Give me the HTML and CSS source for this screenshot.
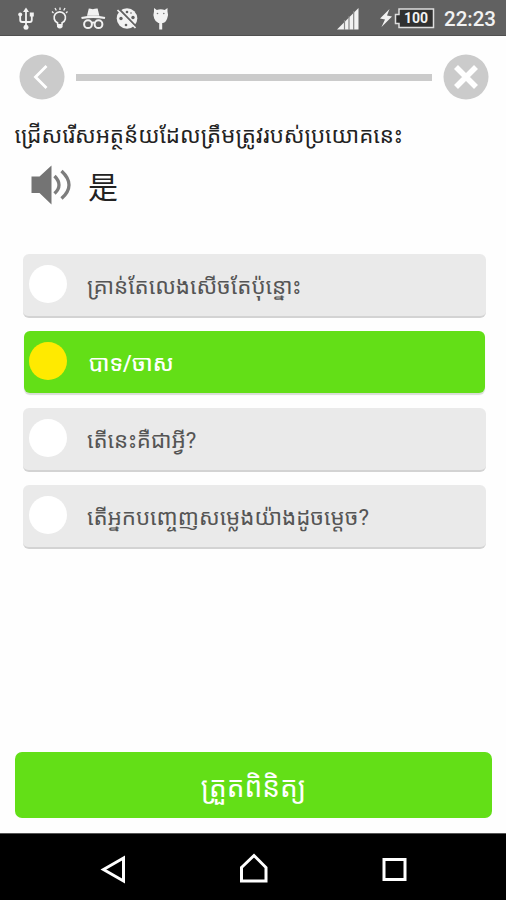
FILE: index.html
```html
<!DOCTYPE html>
<html lang="km">
<head>
<meta charset="utf-8">
<meta name="viewport" content="width=device-width">
<title>Quiz</title>
<link rel="stylesheet" href="styles.css">
</head>
<body>
<div class="screen">
  <div class="status">
    <svg class="status-icons" width="180" height="36" viewBox="0 0 180 36" fill="none" stroke="#f2f2f2" stroke-width="1.8">
      <g>
        <path d="M26 11V27M20.200 15v5q0 2 2 2h7.600q2 0 2-2v-5"/>
        <path d="M26 7.500l3 4.500h-6z" fill="#f2f2f2" stroke="none"/>
        <circle cx="20.200" cy="14.500" r="2" fill="#f2f2f2" stroke="none"/>
        <path d="M29.800 12.500h4v4h-4z" fill="#f2f2f2" stroke="none"/>
        <circle cx="26" cy="27.200" r="2.500" fill="#f2f2f2" stroke="none"/>
      </g>
      <g>
        <path d="M57.500 24.500v-1.700a5.700 5.700 0 1 1 4.600 0v1.700" stroke-width="1.700"/>
        <path d="M57 24h5.600v3q-2.800 3-5.600 0z" fill="#f2f2f2" stroke="none"/>
        <path d="M60 7.500v2.500M55 8l1.300 2.500M65 8l-1.300 2.500M52 11.500l1.500 1.500M67.500 11.500L66 13" stroke-width="1.300"/>
      </g>
      <g>
        <path d="M87 15.700l1.800-7.200q2 0 4 .8 2.500-1 4.800-.8l1.800 7.200z" fill="#f2f2f2" stroke="none"/>
        <path d="M81.500 18q12-2.400 23.500 0" stroke-width="2.200"/>
        <circle cx="88" cy="24.200" r="3.900" stroke-width="2"/><circle cx="98.500" cy="24.200" r="3.900" stroke-width="2"/><path d="M91.500 23q1.700-1 3.500 0"/>
      </g>
      <g>
        <circle cx="127" cy="18.500" r="10.300" fill="#f2f2f2" stroke="none"/>
        <g fill="#616161" stroke="none"><circle cx="127" cy="12" r="1.300"/><circle cx="133" cy="17.500" r="1.700"/><circle cx="121" cy="18.500" r="1.700"/><circle cx="126" cy="25" r="1.300"/><circle cx="131" cy="13" r=".8"/></g>
        <path d="M118.500 8.500l18 18.500" stroke="#616161" stroke-width="2"/>
        <path d="M117.500 10l18 18" stroke-width="1.700"/>
      </g>
      <g>
        <path d="M154 8l2.800 2q4-1.500 7.900 0l2.800-2v3.500q1.300 3.500-.3 7-1.500 4-4.200 4.500h-4.600q-3-1-4.200-4.500-1.500-3.500-.2-7z" fill="#f2f2f2" stroke="none"/>
        <path d="M160.700 22v7.500" stroke-width="3"/>
        <circle cx="157.500" cy="13.500" r=".8" fill="#777" stroke="none"/><circle cx="163.800" cy="13.500" r=".8" fill="#777" stroke="none"/>
      </g>
    </svg>
    <svg class="signal" width="22" height="22" viewBox="0 0 22 22">
      <path d="M0 21.500L21.500 0v21.500z" fill="#f2f2f2"/>
      <path d="M7.500 12v10M12 8v14M16.700 3v19" stroke="#858585" stroke-width="1.200"/>
    </svg>
    <svg class="bolt" width="12" height="18" viewBox="0 0 12 18"><path d="M9.500 0L0 9.500l5 1L1.500 18 12 7.500l-5-1z" fill="#f2f2f2"/></svg>
    <div class="battery">
      <svg width="41" height="21" viewBox="0 0 41 21"><path d="M5 1h34.500v18.500H5v-4H1.500v-9H5z" fill="#303030" stroke="#ddd" stroke-width="1.500"/></svg>
      <span class="level">100</span>
    </div>
    <span class="clock">22:23</span>
  </div>

  <div class="top">
    <svg width="46" height="46" viewBox="0 0 46 46"><circle cx="23" cy="23" r="22.500" fill="#cbcbcb"/><path d="M27.500 12L16.500 23l11 11" fill="none" stroke="#fff" stroke-width="2.800"/></svg>
    <div class="track"></div>
    <svg width="46" height="46" viewBox="0 0 46 46"><circle cx="23" cy="23" r="22.500" fill="#cbcbcb"/><path d="M13 13l20 20M33 13L13 33" stroke="#fff" stroke-width="5.600"/></svg>
  </div>

  <h1 class="question"><span>ជ្រើសរើសអត្ថន័យដែលត្រឹមត្រូវរបស់ប្រយោគនេះ</span></h1>
  <div class="phrase">
    <svg width="42" height="40" viewBox="0 0 42 40"><path d="M1.500 11.500h8L21.500.5v39L9.500 28h-8z" fill="#747474"/><path d="M24.500 11q9 9 0 17.500M31.500 6q15 14 0 27.500" fill="none" stroke="#7d7d7d" stroke-width="3.300"/></svg>
    <span class="word" lang="zh">是</span>
  </div>

  <div class="options">
    <div class="option"><i class="dot"></i><span class="label">គ្រាន់តែលេងសើចតែប៉ុន្នោះ</span></div>
    <div class="option selected"><i class="dot"></i><span class="label">បាទ/ចាស</span></div>
    <div class="option"><i class="dot"></i><span class="label">តើនេះគឺជាអ្វី?</span></div>
    <div class="option"><i class="dot"></i><span class="label">តើអ្នកបញ្ចេញសម្លេងយ៉ាងដូចម្តេច?</span></div>
  </div>

  <div class="check"><span>ត្រួតពិនិត្យ</span></div>

  <div class="nav">
    <svg width="506" height="66" viewBox="0 0 506 66" fill="none" stroke="#fff" stroke-width="3">
      <path d="M103.500 35.500L123.500 24v23z"/>
      <path d="M241.500 33.500L254 21.500l12 12v13.500h-24.500z"/>
      <path d="M384 25.500h21v20h-21z"/>
    </svg>
  </div>
</div>
</body>
</html>
```
FILE: styles.css
```css
* { box-sizing: border-box; }
body {
  margin: 0;
  background: #fefefe;
  font-family: Roboto, "Noto Sans Khmer", "Noto Sans Khmer UI", "Khmer OS", "Noto Sans CJK SC", sans-serif;
}
.screen { width: 506px; height: 900px; display: flex; flex-direction: column; overflow: hidden; }
.status {
  height: 36px; flex: none; display: flex; align-items: center;
  background: #616161; border-bottom: 1px solid #505050; color: #f2f2f2;
}
.status-icons { flex: none; }
.signal { margin-left: 157px; margin-top: 3px; }
.bolt { margin-left: 21px; }
.battery { display: grid; margin-left: 2px; margin-top: 2px; }
.battery > * { grid-area: 1 / 1; }
.level { font-size: 14px; font-weight: 700; line-height: 21px; padding-left: 10px; }
.clock { font-size: 20.500px; font-weight: 500; margin-left: 9px; line-height: 36px; padding-top: 2px; white-space: nowrap; }
.top { height: 46px; margin: 18px 17.500px 0 18.500px; display: flex; align-items: center; justify-content: space-between; flex: none; }
.track { width: 356px; height: 7px; background: #cbcbcb; }
.question { margin: 15px 0 0 14.500px; height: 40px; font-size: 22.300px; line-height: 40px; font-weight: 400; color: #222; white-space: nowrap; flex: none; }
.phrase { margin: 10px 0 0 30px; height: 40px; display: flex; align-items: center; gap: 16px; flex: none; }
.word { font-family: "Noto Sans CJK SC", sans-serif; font-size: 30px; line-height: 40px; height: 41px; color: #222; }
.options { margin: 49px 20px 0 23px; display: flex; flex-direction: column; gap: 13px; flex: none; }
.option {
  height: 64px; display: flex; align-items: center; border-radius: 6px;
  background: #eaeaea; border-bottom: 2px solid #d3d3d3; color: #555; padding: 0 0 2px 6px;
}
.option.selected {
  height: 62px; margin: 0 1px 2px; padding: 0 0 2px 5px; border-bottom: 0;
  background: #63df17; color: #fff; font-weight: 500; box-shadow: 0 2px 1px #d8dcd6;
}
.dot { width: 38px; height: 38px; border-radius: 50%; background: #fff; }
.selected .dot { background: #ffea00; }
.label { margin: 3px 0 0 20px; font-size: 22.300px; line-height: 40px; white-space: nowrap; }
.selected .label { margin-left: 21.500px; }
.check {
  margin: 203px 14px 0 15px; padding-top: 5px; height: 66px; flex: none; border-radius: 7px; background: #63df17; color: #fff;
  display: flex; align-items: center; justify-content: center; font-size: 28px; line-height: 50px;
}
.nav { margin-top: auto; height: 67px; background: #000; border-top: 1px solid #555; flex: none; }
.nav svg { display: block; }
```
